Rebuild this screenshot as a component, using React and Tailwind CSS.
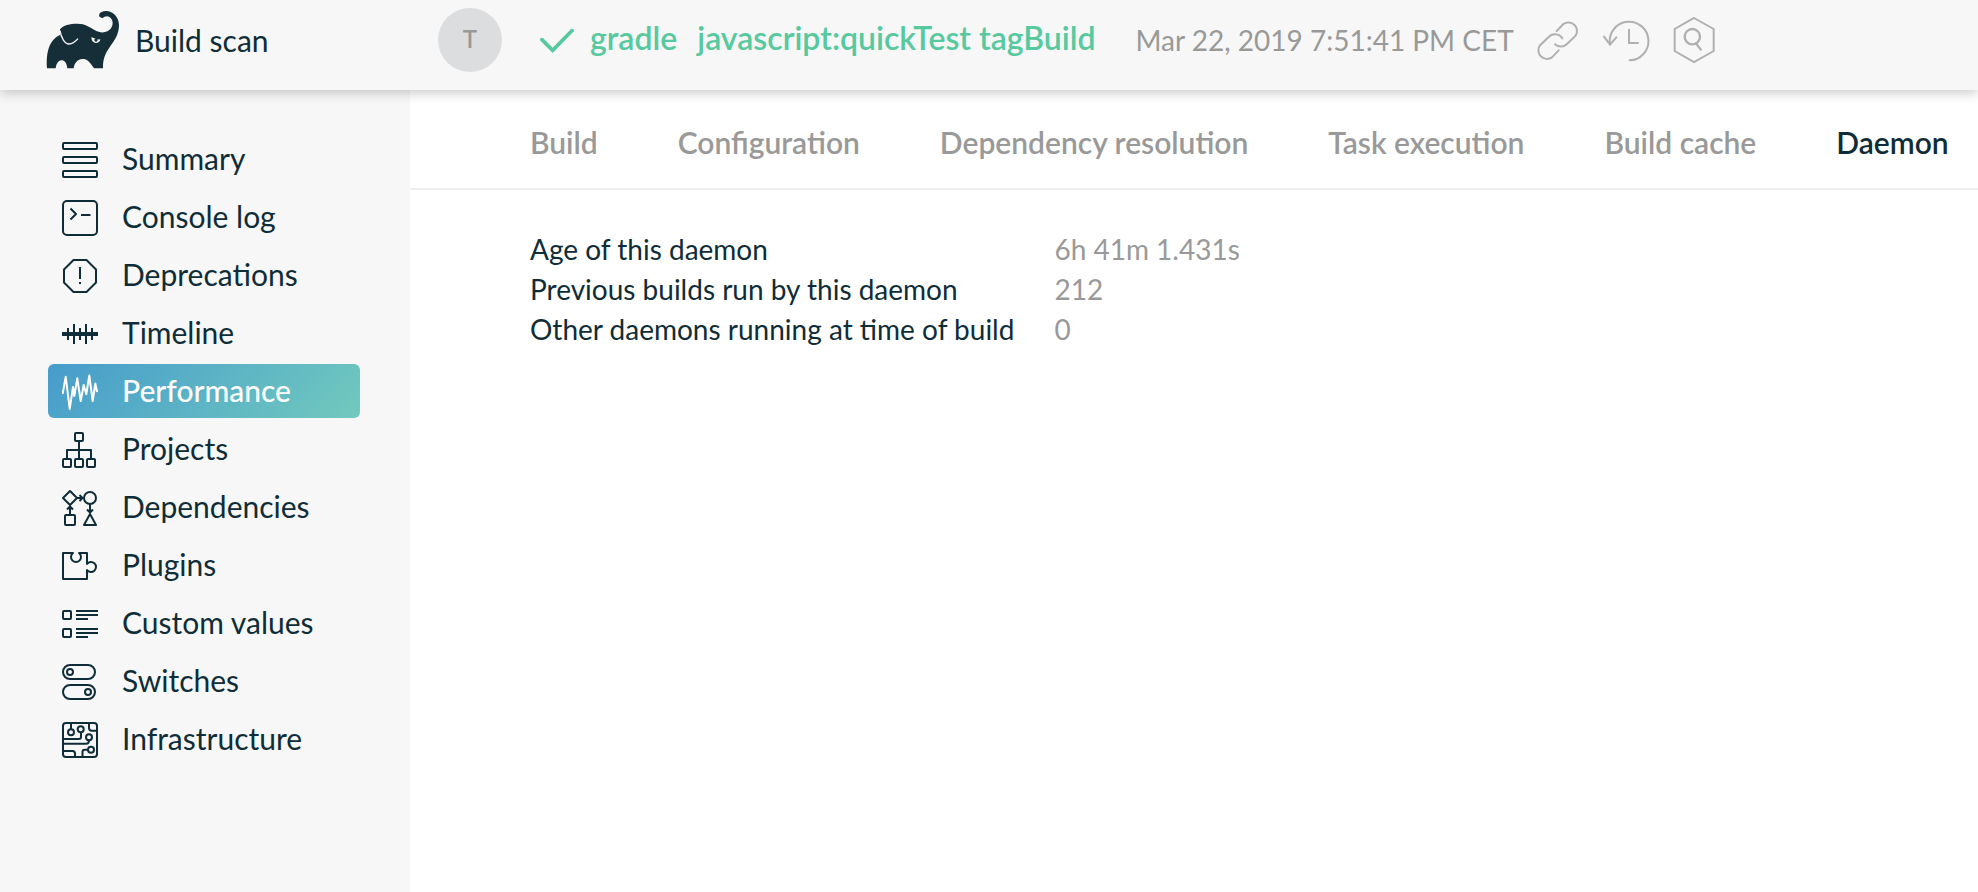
const stroke = {
  fill: 'none',
  stroke: 'currentColor',
  strokeWidth: 2,
  strokeLinejoin: 'round',
};

function NavIcon({ children }) {
  return (
    <svg viewBox="0 0 36 36" className="size-9 shrink-0" aria-hidden="true" {...stroke}>
      {children}
    </svg>
  );
}

const navItems = [
  {
    label: 'Summary',
    icon: (
      <>
        <rect x="1" y="1" width="34" height="6" rx="1" />
        <rect x="1" y="15" width="34" height="6" rx="1" />
        <rect x="1" y="29" width="34" height="6" rx="1" />
      </>
    ),
  },
  {
    label: 'Console log',
    icon: (
      <>
        <rect x="1" y="1" width="34" height="34" rx="4" />
        <path d="M8.500 8.500L14 14L8.500 19.500M19 15H28.500" />
      </>
    ),
  },
  {
    label: 'Deprecations',
    icon: (
      <>
        <path d="M11.500 2H24.500L34 11.500V24.500L24.500 34H11.500L2 24.500V11.500Z" />
        <path d="M18 9V21M18 24V26" />
      </>
    ),
  },
  {
    label: 'Timeline',
    icon: (
      <>
        <path d="M0 18H36" strokeWidth="4" />
        <path d="M6 12V24M12 8V28M18 12V24M24 8V28M30 12V24" />
      </>
    ),
  },
  {
    label: 'Performance',
    active: true,
    icon: (
      <path
        strokeLinecap="round"
        d="M0.800 19L3.700 2.700L7.700 35L11 13L12.300 22L15.300 4.300L18.700 27L21.700 11L24.300 20.300L27.300 1.500L30.700 27L33.300 9.500L35 17.300"
      />
    ),
  },
  {
    label: 'Projects',
    icon: (
      <>
        <rect x="13" y="1" width="8" height="8" rx="1" />
        <rect x="1" y="27" width="8" height="8" rx="1" />
        <rect x="13" y="27" width="8" height="8" rx="1" />
        <rect x="25" y="27" width="8" height="8" rx="1" />
        <path d="M17 9V27M5 27V18H29V27" />
      </>
    ),
  },
  {
    label: 'Dependencies',
    icon: (
      <>
        <path d="M8 1L15 8L8 15L1 8Z" />
        <circle cx="28" cy="8" r="6" />
        <rect x="3" y="25" width="10" height="10" rx="1" />
        <path d="M28 24L34 35H22Z" />
        <path d="M15 8H21M17.500 5L20.500 8L17.500 11" />
        <path d="M8 25V17M5 19.500L8 16.500L11 19.500" />
        <path d="M28 14V22M25 19.500L28 22.500L31 19.500" />
      </>
    ),
  },
  {
    label: 'Plugins',
    icon: <path d="M1 5H11a5 5 0 1 0 6 0H25V16a5 5 0 1 1 0 6V31H1Z" />,
  },
  {
    label: 'Custom values',
    icon: (
      <>
        <rect x="1" y="5" width="8" height="8" rx="1" />
        <rect x="1" y="23" width="8" height="8" rx="1" />
        <path d="M14 5H36M14 9H36M14 13H26M14 23H36M14 27H36M14 31H26" />
      </>
    ),
  },
  {
    label: 'Switches',
    icon: (
      <>
        <rect x="1" y="1" width="32" height="14" rx="7" />
        <rect x="1" y="21" width="32" height="14" rx="7" />
        <circle cx="8" cy="8" r="3" />
        <circle cx="26" cy="28" r="3" />
      </>
    ),
  },
  {
    label: 'Infrastructure',
    icon: (
      <>
        <rect x="1" y="1" width="34" height="34" rx="3" />
        <circle cx="9" cy="10.300" r="3" />
        <circle cx="18.700" cy="7.300" r="3" />
        <circle cx="27" cy="15.300" r="3" />
        <circle cx="29" cy="27.700" r="3" />
        <path d="M9 1V7M19 10.500V15q0 2-2 2H1M27 18.500q0 3.200-3 3.200H1M20.500 35V30q0-2.300 2.300-2.300H26M27 1V6q0 2.700 2.700 2.700H35M1 29H10.500q2.500 0 2.500 2.500V35" />
      </>
    ),
  },
];

const tabs = [
  'Build',
  'Configuration',
  'Dependency resolution',
  'Task execution',
  'Build cache',
  'Daemon',
];

const details = [
  ['Age of this daemon', '6h 41m 1.431s'],
  ['Previous builds run by this daemon', '212'],
  ['Other daemons running at time of build', '0'],
];

function ElephantLogo() {
  return (
    <svg viewBox="48 30 222 180" className="h-[60px] w-[74px] shrink-0" aria-hidden="true">
      <path
        fill="#152e38"
        d="M51 205C48 160 56 120 90 105L90 88C100 76 118 71 143 71C165 71 180 82 195 91C208 98 221 99 232 94C246 87 251 72 246 60C240 47 226 46 218 55L209 51C204 42 212 34 226 33C250 32 267 52 267 76C267 104 252 123 239 142C226 160 218 178 219 205H192C178 182 168 176 157 177C143 178 133 188 131 205H112C110 188 103 181 95 181C86 181 79 189 77 205Z"
      />
      <path
        d="M90 92C93 112 104 132 117 132C128 132 137 124 144 116"
        fill="none"
        stroke="#f7f7f7"
        strokeWidth="4"
      />
      <path
        d="M184 112C192 114 203 120 211 118C210 126 204 129 197 129C188 128 184 121 184 112Z"
        fill="#f7f7f7"
      />
      <circle cx="198" cy="120" r="5" fill="#152e38" />
    </svg>
  );
}

function Header() {
  return (
    <header className="relative z-10 flex h-[90px] items-center bg-[#f7f7f7] pb-2.5 shadow-[0_2px_12px_rgba(0,0,0,0.24)]">
      <a href="#home" className="flex w-[438px] shrink-0 items-center gap-[15px] pl-[46px]">
        <ElephantLogo />
        <span className="text-[30px] leading-10">Build scan</span>
      </a>
      <div className="flex size-16 shrink-0 items-center justify-center rounded-full bg-[#dcddde] pb-0.5 text-2xl font-semibold text-[#999]">
        T
      </div>
      <svg
        viewBox="354 78 114 84"
        className="ml-9 h-7 w-[38px] shrink-0 text-[#57c99f]"
        fill="none"
        stroke="currentColor"
        strokeWidth="11"
        role="img"
        aria-label="Build succeeded"
      >
        <path d="M365 118L398 151L457 91" />
        <circle cx="365.500" cy="118.500" r="5.500" fill="currentColor" stroke="none" />
        <circle cx="456.500" cy="91.500" r="5.500" fill="currentColor" stroke="none" />
      </svg>
      <h1 className="ml-3.5 flex gap-5 pb-1 text-[32px] leading-10 font-semibold whitespace-nowrap text-[#57c99f]">
        <span>gradle</span>
        <span>javascript:quickTest tagBuild</span>
      </h1>
      <time dateTime="2019-03-22T19:51:41" className="ml-10 text-[28px] leading-10 whitespace-nowrap text-[#999]">
        Mar 22, 2019 7:51:41 PM CET
      </time>
      <div className="ml-[22px] flex items-center gap-[22px] text-[#b0b0b0]">
        <button type="button" aria-label="Copy link">
          <svg viewBox="708 54 132 129" className="h-[43px] w-11" fill="none" stroke="currentColor" strokeWidth="6" strokeLinecap="round">
            <path d="M770 90L790 69A26 26 0 0 1 827 104L801 129A26 26 0 0 1 765 130" />
            <path d="M776 148L756 169A26 26 0 0 1 719 134L745 109A26 26 0 0 1 787 112" />
          </svg>
        </button>
        <button type="button" aria-label="Build history">
          <svg viewBox="906 54 144 132" className="h-11 w-12" fill="none" stroke="currentColor" strokeWidth="6" strokeLinecap="round">
            <path d="M930 132A58 58 0 1 1 989 181" />
            <path d="M912 110L930 134L949 112" />
            <path d="M987 89V129H1014" />
          </svg>
        </button>
        <button type="button" aria-label="Search builds">
          <svg viewBox="1116 48 132 144" className="h-12 w-11" fill="none" stroke="currentColor" strokeWidth="6">
            <path d="M1182 54L1241 87V153L1182 186L1124 153V87Z" />
            <circle cx="1177" cy="110" r="23" strokeWidth="7" />
            <path d="M1188 130L1204 151" strokeWidth="7" />
          </svg>
        </button>
      </div>
    </header>
  );
}

function Sidebar() {
  return (
    <nav aria-label="Build scan" className="w-[410px] shrink-0 bg-[#f7f7f7] pt-[42px] pr-[50px] pl-12">
      <ul className="flex flex-col gap-1">
        {navItems.map(({ label, icon, active }) => (
          <li key={label}>
            <a
              href={`#${label.toLowerCase().replace(' ', '-')}`}
              aria-current={active ? 'page' : undefined}
              className={
                active
                  ? 'flex items-start gap-6 rounded-md bg-linear-135 from-[#469ccb] to-[#72c9bd] px-3.5 pt-2.5 pb-2 font-medium text-white'
                  : 'flex items-start gap-6 px-3.5 pt-2.5 pb-2'
              }
            >
              <NavIcon>{icon}</NavIcon>
              <span className="text-[30px] leading-8 whitespace-nowrap">{label}</span>
            </a>
          </li>
        ))}
      </ul>
    </nav>
  );
}

export default function App() {
  return (
    <div className="flex min-h-screen flex-col overflow-x-hidden bg-white font-['Lato',sans-serif] text-[#0f2d38]">
      <Header />
      <div className="flex grow">
        <Sidebar />
        <main className="min-w-0 grow">
          <nav
            aria-label="Performance"
            className="flex h-[100px] items-center gap-20 border-b-2 border-[#eee] pt-1.5 pl-[120px] text-[30px] leading-9 font-semibold whitespace-nowrap text-[#999]"
          >
            {tabs.map((tab) => (
              <a
                key={tab}
                href={`#${tab.toLowerCase().replace(' ', '-')}`}
                aria-current={tab === 'Daemon' ? 'page' : undefined}
                className={tab === 'Daemon' ? 'text-[#0f2d38]' : undefined}
              >
                {tab}
              </a>
            ))}
          </nav>
          <table className="mt-[39px] ml-[120px] text-left text-[28px] leading-10">
            <tbody>
              {details.map(([name, value]) => (
                <tr key={name}>
                  <th scope="row" className="p-0 pr-10 font-normal">
                    {name}
                  </th>
                  <td className="p-0 text-[#999]">{value}</td>
                </tr>
              ))}
            </tbody>
          </table>
        </main>
      </div>
    </div>
  );
}
